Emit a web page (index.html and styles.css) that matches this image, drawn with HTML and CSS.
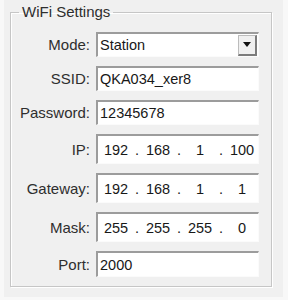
FILE: index.html
```html
<!DOCTYPE html>
<html lang="en">
<head>
    <meta charset="UTF-8">
    <title>WiFi Settings</title>
    <link rel="stylesheet" href="styles.css">
</head>
<body>
    <div class="window">
        <fieldset class="group">
            <legend>WiFi Settings</legend>
            <div class="rows">
                <div class="row">
                    <label>Mode:</label>
                    <div class="field combo">
                        <span class="value">Station</span>
                        <span class="drop"><span class="arrow"></span></span>
                    </div>
                </div>
                <div class="row">
                    <label>SSID:</label>
                    <div class="field"><span class="value">QKA034_xer8</span></div>
                </div>
                <div class="row">
                    <label>Password:</label>
                    <div class="field"><span class="value">12345678</span></div>
                </div>
                <div class="row">
                    <label>IP:</label>
                    <div class="field ip">
                        <span class="oct">192</span><span class="dot">.</span>
                        <span class="oct">168</span><span class="dot">.</span>
                        <span class="oct">1</span><span class="dot">.</span>
                        <span class="oct">100</span>
                    </div>
                </div>
                <div class="row">
                    <label>Gateway:</label>
                    <div class="field ip">
                        <span class="oct">192</span><span class="dot">.</span>
                        <span class="oct">168</span><span class="dot">.</span>
                        <span class="oct">1</span><span class="dot">.</span>
                        <span class="oct">1</span>
                    </div>
                </div>
                <div class="row">
                    <label>Mask:</label>
                    <div class="field ip">
                        <span class="oct">255</span><span class="dot">.</span>
                        <span class="oct">255</span><span class="dot">.</span>
                        <span class="oct">255</span><span class="dot">.</span>
                        <span class="oct">0</span>
                    </div>
                </div>
                <div class="row">
                    <label>Port:</label>
                    <div class="field port"><span class="value">2000</span></div>
                </div>
            </div>
        </fieldset>
    </div>
</body>
</html>
```

FILE: styles.css
```css
body {
    margin: 0;
    background: #f8f8f8;
    font-family: "Liberation Sans", Arial, sans-serif;
    font-size: 14.5px;
    color: #1e1e1e;
}

.window {
    margin-left: 4px;
    width: 279px;
    height: 297px;
    padding: 3px 0 0 6px;
    box-sizing: border-box;
    background: #f0f0f0;
}

.group {
    margin: 0;
    padding: 0;
    width: 262px;
    height: 284px;
    box-sizing: border-box;
    border: 1px solid #c6c6c6;
    box-shadow: inset 1px 1px 0 #fff, 1px 1px 0 #fff;
}

.group legend {
    margin-left: 8px;
    padding: 0 3px;
    line-height: 18px;
    font-size: 15px;
    color: #2e2e2e;
}

.rows {
    display: flex;
    flex-direction: column;
    gap: 9px;
    padding-top: 11px;
}

.row {
    display: flex;
    align-items: center;
    gap: 6px;
}

.row label {
    width: 79px;
    text-align: right;
    font-size: 15px;
    color: #2e2e2e;
}

.field {
    width: 163px;
    height: 25px;
    box-sizing: border-box;
    display: flex;
    align-items: center;
    background: #fff;
    border-top: 2px solid #9c9c9c;
    border-left: 2px solid #9c9c9c;
    border-right: 1px solid #fbfbfb;
    border-bottom: 1px solid #fbfbfb;
    padding-left: 2px;
    color: #181818;
}

.field.ip {
    height: 30px;
}

.field.port {
    height: 26px;
}

.combo {
    justify-content: space-between;
    padding-right: 1px;
}

.drop {
    width: 19px;
    height: 21px;
    box-sizing: border-box;
    display: flex;
    align-items: center;
    justify-content: center;
    background: #f0f0f0;
    border: 1px solid #bcbcbc;
    border-right: 2px solid #7c7c7c;
    border-bottom: 2px solid #7c7c7c;
}

.arrow {
    width: 0;
    height: 0;
    border-left: 4px solid transparent;
    border-right: 4px solid transparent;
    border-top: 5px solid #111;
}

.oct {
    width: 32px;
    text-align: center;
}

.dot {
    width: 10px;
    text-align: center;
}
```
